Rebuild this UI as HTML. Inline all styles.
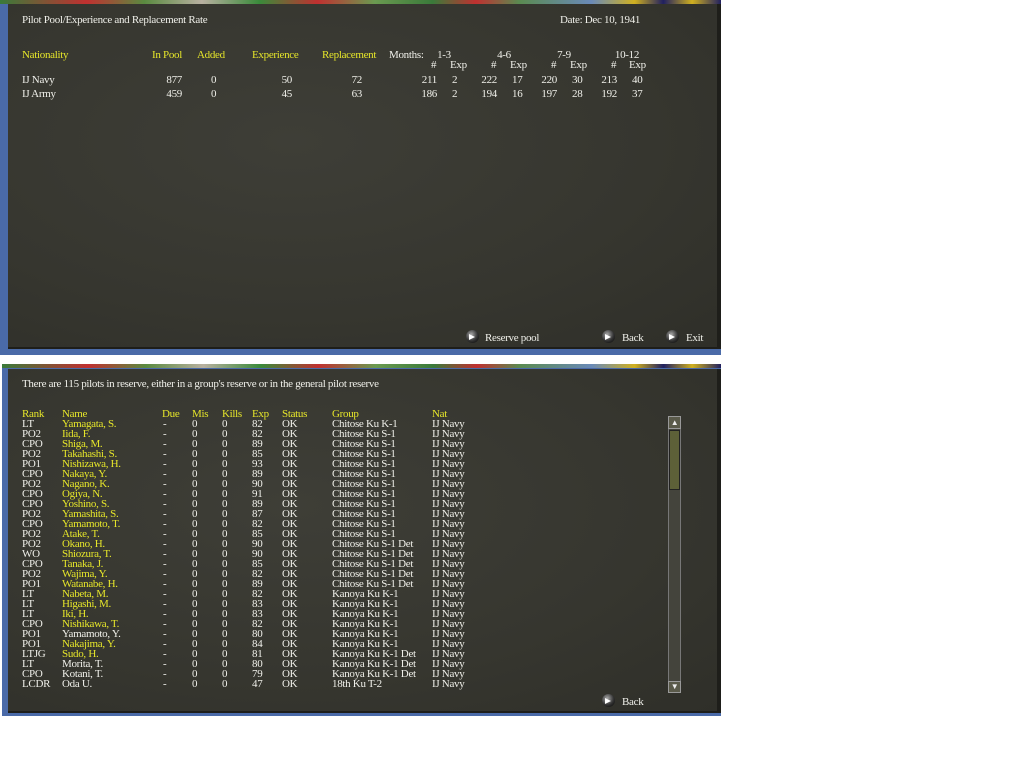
<!DOCTYPE html>
<html><head><meta charset="utf-8"><style>
*{margin:0;padding:0;box-sizing:border-box}
body{width:1024px;height:768px;background:#fff;position:relative;overflow:hidden;font-family:"Liberation Serif",serif;font-size:11px;letter-spacing:-0.3px;color:#f0f0ea}
.frame{position:absolute;background:#4a6aa8}
.strip{position:absolute;left:0;right:0;top:0;height:4px;background:linear-gradient(90deg,#3a7a3a 0,#c03030 12%,#5a8a40 20%,#b8b0a0 28%,#3a8a3a 36%,#c03030 44%,#6a9a50 52%,#3a7a3a 60%,#c03030 66%,#5a8a50 72%,#6a8ab8 82%,#d0b020 88%,#202060 92%,#d0b020 96%,#202060 100%)}
.dark{position:absolute;background:radial-gradient(ellipse at 40% 40%,#3e3e37 0,#36362f 60%,#2f2f29 100%);border-right:4px solid #1e1e1a;border-bottom:2px solid #1e1e1a}
.t{position:absolute;white-space:nowrap;line-height:12px}
.y{color:#e6e62a}
.c{position:absolute;width:40px;text-align:center;white-space:nowrap;line-height:12px}
.r{position:absolute;text-align:right;white-space:nowrap;line-height:12px}
.btn{position:absolute;width:13px;height:13px;border-radius:50%;background:radial-gradient(circle at 40% 35%,#aaa 0,#333 55%,#000 100%)}
.btn:after{content:"";position:absolute;left:3px;top:3.5px;width:0;height:0;border-left:6px solid #fff;border-top:3px solid transparent;border-bottom:3px solid transparent}
.row{position:absolute;left:0;height:10px;line-height:10px;white-space:nowrap}
.row span{position:absolute;top:0}
</style></head><body>

<div class="frame" style="left:0;top:0;width:721px;height:355px">
  <div class="strip"></div>
  <div class="dark" style="left:8px;top:4px;width:713px;height:345px"></div>
</div>
<div class="t" style="left:22px;top:14px">Pilot Pool/Experience and Replacement Rate</div>
<div class="t" style="left:560px;top:14px">Date: Dec 10, 1941</div>

<div class="t y" style="left:22px;top:49px">Nationality</div>
<div class="t y" style="left:152px;top:49px">In Pool</div>
<div class="t y" style="left:197px;top:49px">Added</div>
<div class="t y" style="left:252px;top:49px">Experience</div>
<div class="t y" style="left:322px;top:49px">Replacement</div>
<div class="t" style="left:389px;top:49px">Months:</div>
<div class="c" style="left:424px;top:49px">1-3</div>
<div class="c" style="left:484px;top:49px">4-6</div>
<div class="c" style="left:544px;top:49px">7-9</div>
<div class="c" style="left:607px;top:49px">10-12</div>
<div class="t" style="left:431px;top:59px">#</div><div class="t" style="left:450px;top:59px">Exp</div>
<div class="t" style="left:491px;top:59px">#</div><div class="t" style="left:510px;top:59px">Exp</div>
<div class="t" style="left:551px;top:59px">#</div><div class="t" style="left:570px;top:59px">Exp</div>
<div class="t" style="left:611px;top:59px">#</div><div class="t" style="left:629px;top:59px">Exp</div>

<div class="t" style="left:22px;top:74px">IJ Navy</div>
<div class="t" style="left:22px;top:88px">IJ Army</div>
<div class="r" style="left:140px;width:42px;top:74px">877</div>
<div class="r" style="left:140px;width:42px;top:88px">459</div>
<div class="t" style="left:211px;top:74px">0</div>
<div class="t" style="left:211px;top:88px">0</div>
<div class="r" style="left:250px;width:42px;top:74px">50</div>
<div class="r" style="left:250px;width:42px;top:88px">45</div>
<div class="r" style="left:320px;width:42px;top:74px">72</div>
<div class="r" style="left:320px;width:42px;top:88px">63</div>

<div class="r" style="left:400px;width:37px;top:74px">211</div><div class="t" style="left:452px;top:74px">2</div>
<div class="r" style="left:460px;width:37px;top:74px">222</div><div class="t" style="left:512px;top:74px">17</div>
<div class="r" style="left:520px;width:37px;top:74px">220</div><div class="t" style="left:572px;top:74px">30</div>
<div class="r" style="left:580px;width:37px;top:74px">213</div><div class="t" style="left:632px;top:74px">40</div>
<div class="r" style="left:400px;width:37px;top:88px">186</div><div class="t" style="left:452px;top:88px">2</div>
<div class="r" style="left:460px;width:37px;top:88px">194</div><div class="t" style="left:512px;top:88px">16</div>
<div class="r" style="left:520px;width:37px;top:88px">197</div><div class="t" style="left:572px;top:88px">28</div>
<div class="r" style="left:580px;width:37px;top:88px">192</div><div class="t" style="left:632px;top:88px">37</div>

<div class="btn" style="left:466px;top:330px"></div><div class="t" style="left:485px;top:332px">Reserve pool</div>
<div class="btn" style="left:602px;top:330px"></div><div class="t" style="left:622px;top:332px">Back</div>
<div class="btn" style="left:666px;top:330px"></div><div class="t" style="left:686px;top:332px">Exit</div>

<div class="frame" style="left:2px;top:364px;width:719px;height:352px">
  <div class="strip"></div>
  <div class="dark" style="left:6px;top:5px;width:713px;height:344px"></div>
</div>
<div class="t" style="left:22px;top:378px">There are 115 pilots in reserve, either in a group's reserve or in the general pilot reserve</div>

<div id="tbl" style="position:absolute;left:0;top:409px;width:700px">
<div class="row y" style="top:0"><span style="left:22px">Rank</span><span style="left:62px">Name</span><span style="left:162px">Due</span><span style="left:192px">Mis</span><span style="left:222px">Kills</span><span style="left:252px">Exp</span><span style="left:282px">Status</span><span style="left:332px">Group</span><span style="left:432px">Nat</span></div>
</div>

<div style="position:absolute;left:668px;top:416px;width:13px;height:277px;background:#44443c;border:1px solid #777;"></div>
<div style="position:absolute;left:668px;top:416px;width:13px;height:13px;background:#5a5a4a;border:1px solid #999;color:#eee;font-size:8px;text-align:center;line-height:11px">▲</div>
<div style="position:absolute;left:669px;top:430px;width:11px;height:60px;background:#5d6038;border:1px solid #222"></div>
<div style="position:absolute;left:668px;top:681px;width:13px;height:12px;background:#5a5a4a;border:1px solid #999;color:#eee;font-size:8px;text-align:center;line-height:10px">▼</div>

<div class="btn" style="left:602px;top:694px"></div><div class="t" style="left:622px;top:696px">Back</div>

<script>
var d=[["LT","Yamagata, S.",1,82,"Chitose Ku K-1"],["PO2","Iida, F.",1,82,"Chitose Ku S-1"],["CPO","Shiga, M.",1,89,"Chitose Ku S-1"],["PO2","Takahashi, S.",1,85,"Chitose Ku S-1"],["PO1","Nishizawa, H.",1,93,"Chitose Ku S-1"],["CPO","Nakaya, Y.",1,89,"Chitose Ku S-1"],["PO2","Nagano, K.",1,90,"Chitose Ku S-1"],["CPO","Ogiya, N.",1,91,"Chitose Ku S-1"],["CPO","Yoshino, S.",1,89,"Chitose Ku S-1"],["PO2","Yamashita, S.",1,87,"Chitose Ku S-1"],["CPO","Yamamoto, T.",1,82,"Chitose Ku S-1"],["PO2","Atake, T.",1,85,"Chitose Ku S-1"],["PO2","Okano, H.",1,90,"Chitose Ku S-1 Det"],["WO","Shiozura, T.",1,90,"Chitose Ku S-1 Det"],["CPO","Tanaka, J.",1,85,"Chitose Ku S-1 Det"],["PO2","Wajima, Y.",1,82,"Chitose Ku S-1 Det"],["PO1","Watanabe, H.",1,89,"Chitose Ku S-1 Det"],["LT","Nabeta, M.",1,82,"Kanoya Ku K-1"],["LT","Higashi, M.",1,83,"Kanoya Ku K-1"],["LT","Iki, H.",1,83,"Kanoya Ku K-1"],["CPO","Nishikawa, T.",1,82,"Kanoya Ku K-1"],["PO1","Yamamoto, Y.",0,80,"Kanoya Ku K-1"],["PO1","Nakajima, Y.",1,84,"Kanoya Ku K-1"],["LTJG","Sudo, H.",1,81,"Kanoya Ku K-1 Det"],["LT","Morita, T.",0,80,"Kanoya Ku K-1 Det"],["CPO","Kotani, T.",0,79,"Kanoya Ku K-1 Det"],["LCDR","Oda U.",0,47,"18th Ku T-2"]];
var h="";d.forEach(function(r,i){h+='<div class="row" style="top:'+(10+i*10)+'px"><span style="left:22px">'+r[0]+'</span><span style="left:62px'+(r[2]?';color:#e6e62a':'')+'">'+r[1]+'</span><span style="left:163px">-</span><span style="left:192px">0</span><span style="left:222px">0</span><span style="left:252px">'+r[3]+'</span><span style="left:282px">OK</span><span style="left:332px">'+r[4]+'</span><span style="left:432px">IJ Navy</span></div>';});
document.getElementById("tbl").insertAdjacentHTML("beforeend",h);
</script>
</body></html>
